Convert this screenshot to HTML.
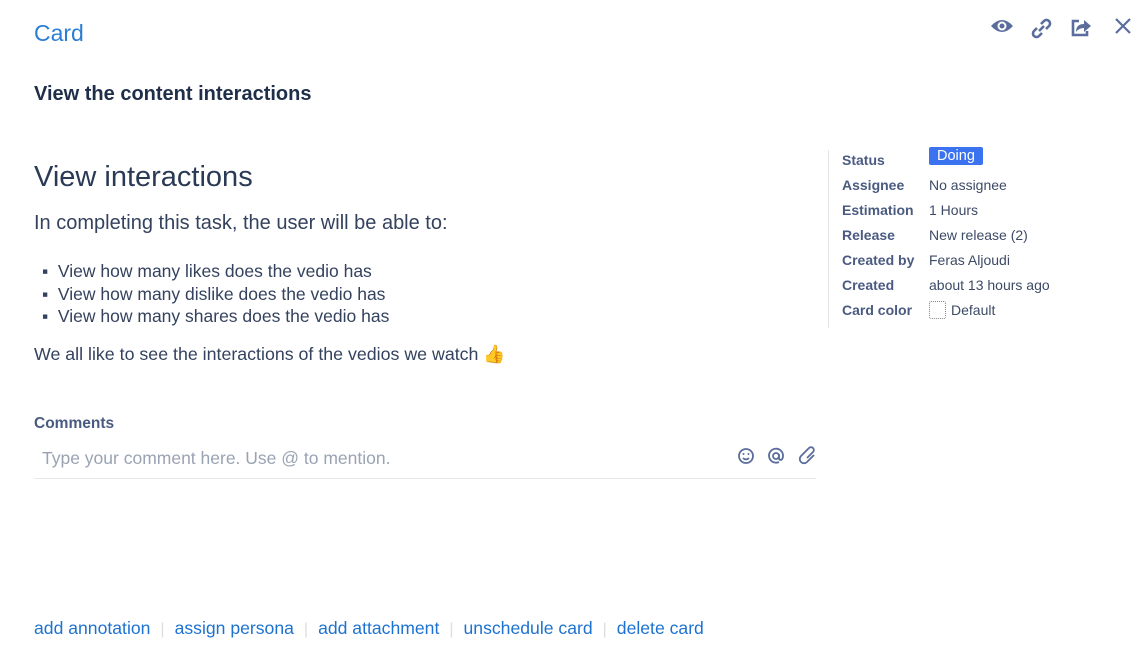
<!DOCTYPE html>
<html><head><meta charset="utf-8"><style>
body{margin:0;width:1147px;height:647px;background:#fff;font-family:"Liberation Sans",sans-serif;position:relative;overflow:hidden}
.a{position:absolute;white-space:nowrap}
.lbl{color:#4a5a80;font-weight:bold;font-size:14px}
.val{color:#3d4a66;font-size:14px}
.ft a{color:#1d72d0;text-decoration:none;font-size:17.6px}
.sep{color:#ddd;margin:0 10px}
</style></head><body>
<div class="a" style="left:34px;top:20px;font-size:23px;color:#2a7ed3">Card</div>
<svg class="a" style="left:990px;top:13px" width="145" height="28" viewBox="0 0 145 28">
<g fill="#5a6d9c" stroke="#5a6d9c">
<path d="M1 13 Q12 1 23 13 Q12 25 1 13Z" stroke="none"/>
<circle cx="12" cy="13" r="4.5" fill="#fff" stroke="none"/><circle cx="12" cy="13" r="2.5" stroke="none"/>
<g fill="none" stroke-width="2.6"><path d="M51 11 l3-3 a3.5 3.5 0 0 1 5 5 l-3 3"/><path d="M47 15 l-3 3 a3.5 3.5 0 0 0 5 5 l3-3"/><path d="M49 18 l5-5"/></g>
<path d="M89 8 h-6 v14 h14 v-4" fill="none" stroke-width="2.6"/>
<path d="M86 19 q0-8 8-8 v-4 l7 6 -7 6 v-4 q-5 0 -8 4z" stroke="none"/>
<path d="M126 6 l14 14 M140 6 l-14 14" stroke-width="2.2" fill="none"/>
</g></svg>
<div class="a" style="left:34px;top:83px;font-size:20px;font-weight:bold;color:#1f2f4a">View the content interactions</div>
<div class="a" style="left:34px;top:161px;font-size:29px;color:#2a3a55">View interactions</div>
<div class="a" style="left:34px;top:212px;font-size:20px;color:#34425e">In completing this task, the user will be able to:</div>
<div class="a" style="left:42px;top:260px;font-size:17.5px;color:#34425e;line-height:22.5px">
<div>▪ &nbsp;View how many likes does the vedio has</div>
<div>▪ &nbsp;View how many dislike does the vedio has</div>
<div>▪ &nbsp;View how many shares does the vedio has</div></div>
<div class="a" style="left:34px;top:344px;font-size:17.8px;color:#34425e">We all like to see the interactions of the vedios we watch 👍</div>
<div class="a" style="left:34px;top:415px;font-size:15.5px;font-weight:bold;color:#4a5a80">Comments</div>
<div class="a" style="left:42px;top:448px;font-size:17.5px;color:#9aa3b3">Type your comment here. Use @ to mention.</div>
<svg class="a" style="left:737px;top:446px" width="80" height="20" viewBox="0 0 80 20">
<g fill="none" stroke="#5a6d9c" stroke-width="1.8">
<circle cx="9" cy="10" r="7"/><path d="M6 12 q3 3 6 0"/>
<circle cx="39" cy="10" r="3"/><path d="M42 8 v4 q0 2 2 2 q2-1 2-4 a7 7 0 1 0 -4 6"/>
<path d="M70 12 l6-6 a2.5 2.5 0 0 0 -4 -4 l-8 8 a4 4 0 0 0 6 6 l7-7"/>
</g><circle cx="6.5" cy="8" r="1" fill="#5a6d9c"/><circle cx="11.5" cy="8" r="1" fill="#5a6d9c"/></svg>
<div class="a" style="left:34px;top:478px;width:782px;height:1px;background:#e8e8e8"></div>
<div class="a" style="left:828px;top:150px;width:1px;height:178px;background:#e6e6e6"></div>
<div class="a lbl" style="left:842px;top:148px;line-height:25px">Status<br>Assignee<br>Estimation<br>Release<br>Created by<br>Created<br>Card color</div>
<div class="a" style="left:929px;top:147px;background:#3b72f0;color:#fff;font-size:14.5px;padding:1px 8px;border-radius:2px">Doing</div>
<div class="a val" style="left:929px;top:173px;line-height:25px">No assignee<br>1 Hours<br>New release (2)<br>Feras Aljoudi<br>about 13 hours ago<br><span style="display:inline-block;width:15px;height:16px;border:1px dotted #888;border-radius:2px;vertical-align:-4px;margin-right:5px"></span>Default</div>
<div class="a ft" style="left:34px;top:618px"><a>add annotation</a><span class="sep">|</span><a>assign persona</a><span class="sep">|</span><a>add attachment</a><span class="sep">|</span><a>unschedule card</a><span class="sep">|</span><a>delete card</a></div>
</body></html>
